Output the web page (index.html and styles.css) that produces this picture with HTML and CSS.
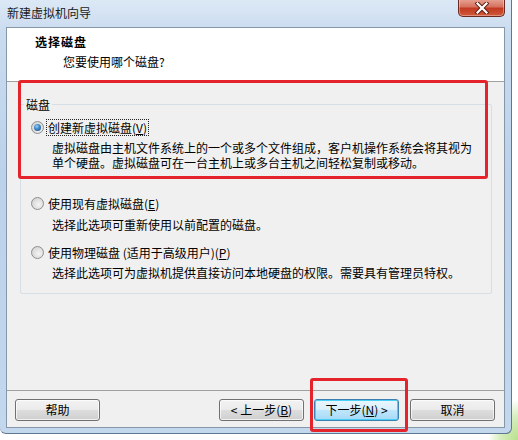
FILE: index.html
```html
<!DOCTYPE html>
<html>
<head>
<meta charset="utf-8">
<link rel="stylesheet" href="styles.css">
</head>
<body>
<div class="window">
  <div class="titlebar">
    <span class="title">新建虚拟机向导</span>
    <div class="close">
      <svg width="18" height="12" viewBox="0 0 18 12"><path d="M4.5 1.5 L13.5 10.5 M13.5 1.5 L4.5 10.5" stroke="#5a1a10" stroke-width="4" stroke-linecap="square"/><path d="M4.5 1.5 L13.5 10.5 M13.5 1.5 L4.5 10.5" stroke="#fff" stroke-width="2.2" stroke-linecap="square"/></svg>
    </div>
  </div>
  <div class="client">
    <div class="header">
      <div class="h-title">选择磁盘</div>
      <div class="h-sub">您要使用哪个磁盘?</div>
    </div>
    <div class="body">
      <fieldset class="group">
        <legend>磁盘</legend>
        <div class="opt opt1">
          <div class="row"><span class="radio checked"></span><span class="label focus">创建新虚拟磁盘(<u>V</u>)</span></div>
          <div class="desc">虚拟磁盘由主机文件系统上的一个或多个文件组成，客户机操作系统会将其视为<br>单个硬盘。虚拟磁盘可在一台主机上或多台主机之间轻松复制或移动。</div>
        </div>
        <div class="opt opt2">
          <div class="row"><span class="radio"></span><span class="label">使用现有虚拟磁盘(<u>E</u>)</span></div>
          <div class="desc">选择此选项可重新使用以前配置的磁盘。</div>
        </div>
        <div class="opt opt3">
          <div class="row"><span class="radio"></span><span class="label">使用物理磁盘 (适用于高级用户)(<u>P</u>)</span></div>
          <div class="desc">选择此选项可为虚拟机提供直接访问本地硬盘的权限。需要具有管理员特权。</div>
        </div>
      </fieldset>
    </div>
    <div class="footer">
      <button class="btn">帮助</button>
      <div class="spacer"></div>
      <button class="btn">&lt; 上一步(<u>B</u>)</button>
      <button class="btn default">下一步(<u>N</u>) &gt;</button>
      <button class="btn">取消</button>
    </div>
  </div>
</div>
<div class="annot annot-group"></div>
<div class="annot annot-next"></div>
</body>
</html>
```
FILE: styles.css
```css
html, body {
  margin: 0;
  padding: 0;
}
body {
  width: 518px;
  height: 440px;
  overflow: hidden;
  position: relative;
  background:
    radial-gradient(ellipse 30px 40px at 100% 100%, #b9e08c 0%, #d7eec0 60%, rgba(255,255,255,0) 100%),
    #ffffff;
  font-family: "Noto Sans CJK SC", "Noto Sans", sans-serif;
  font-size: 12px;
  color: #000;
}
.window {
  width: 512px;
  height: 434px;
  box-sizing: border-box;
  padding: 0 6px 5px 6px;
  background: linear-gradient(180deg, #dce8f5 0%, #c9dbef 8%, #bcd2ea 40%, #c3d7ed 100%);
  border-right: 1px solid #5f7892;
  border-bottom: 1px solid #5f7892;
  border-radius: 0 0 6px 6px;
  display: flex;
  flex-direction: column;
}
.titlebar {
  height: 27px;
  display: flex;
  align-items: center;
  position: relative;
}
.title {
  margin-left: 1px;
  margin-top: -1px;
  line-height: 14px;
  color: #1a1a1a;
}
.close {
  position: absolute;
  right: 0;
  top: -1px;
  width: 47px;
  height: 18px;
  box-sizing: border-box;
  border: 1px solid #6b2a20;
  border-top: none;
  border-radius: 0 0 5px 5px;
  background: linear-gradient(180deg, #e7a596 0%, #d67260 45%, #c23a22 55%, #d05a3a 100%);
  display: flex;
  align-items: center;
  justify-content: center;
  box-shadow: inset 0 0 0 1px rgba(255,255,255,0.35);
}
.client {
  flex: 1;
  display: flex;
  flex-direction: column;
  background: #f0f0f0;
  border: 1px solid #8797aa;
}
.header {
  background: #fff;
  border-bottom: 1px solid #a0a0a0;
  padding-top: 6px;
  box-sizing: content-box;
  height: 47px;
}
.h-title {
  margin-left: 28px;
  font-weight: bold;
  line-height: 16px;
  letter-spacing: 1px;
}
.h-sub {
  margin-left: 56px;
  margin-top: 4px;
  line-height: 16px;
}
.body {
  flex: 1;
}
.group {
  margin: 15px 12px 0 13px;
  padding: 0;
  border: 1px solid #d5dfe5;
  border-radius: 2px;
  height: 197px;
  box-sizing: border-box;
}
.group legend {
  padding: 0 2px;
  margin-left: 3px;
  line-height: 15px;
}
.opt {
  padding-left: 10px;
}
.opt1 { margin-top: 7px; }
.opt2 { margin-top: 25px; }
.opt3 { margin-top: 12px; }
.row {
  display: flex;
  align-items: center;
  height: 16px;
}
.radio {
  width: 13px;
  height: 13px;
  box-sizing: border-box;
  border-radius: 50%;
  border: 1px solid #8d8f91;
  background: radial-gradient(circle at 60% 60%, #f4f4f4 0%, #dcdcdc 60%, #c9c9c9 100%);
  position: relative;
  flex: none;
}
.radio.checked::after {
  content: "";
  position: absolute;
  left: 2px;
  top: 2px;
  width: 7px;
  height: 7px;
  border-radius: 50%;
  background: radial-gradient(circle at 40% 35%, #9ad0f2 0%, #3a82c4 45%, #1b4f86 100%);
}
.label {
  margin-left: 3px;
  padding: 0 1px;
  line-height: 15px;
}
.label.focus {
  outline: 1px dotted #222;
  outline-offset: 0;
}
.desc {
  margin-left: 21px;
  margin-top: 5px;
  line-height: 15px;
}
.opt2 .desc { margin-top: 6px; }
.footer {
  height: 28px;
  border-top: 1px solid #a0a0a0;
  padding: 8px 9px 0 8px;
  display: flex;
  align-items: flex-start;
}
.spacer { flex: 1; }
.btn {
  width: 85px;
  height: 22px;
  box-sizing: border-box;
  border: 1px solid #707070;
  border-radius: 3px;
  background: linear-gradient(180deg, #f2f2f2 0%, #ebebeb 48%, #dddddd 52%, #cfcfcf 100%);
  box-shadow: inset 0 0 0 1px rgba(255,255,255,0.7);
  font-family: "Noto Sans CJK SC", "Noto Sans", sans-serif;
  font-size: 12px;
  color: #000;
  padding: 0;
  margin-left: 10px;
  line-height: 18px;
}
.btn:first-child { margin-left: 0; }
.btn:last-child { margin-left: 11px; }
.btn.default {
  border-color: #3c7fb1;
  background: linear-gradient(180deg, #eaf6fd 0%, #d9f0fc 48%, #bee6fd 52%, #a7d9f5 100%);
  box-shadow: inset 0 0 0 1px #48d0f7;
}
.annot {
  position: absolute;
  border: 3px solid #e4242a;
  border-radius: 3px;
  box-sizing: border-box;
}
.annot-group {
  left: 18px;
  top: 80px;
  width: 470px;
  height: 99px;
}
.annot-next {
  left: 310px;
  top: 378px;
  width: 98px;
  height: 54px;
}
```
